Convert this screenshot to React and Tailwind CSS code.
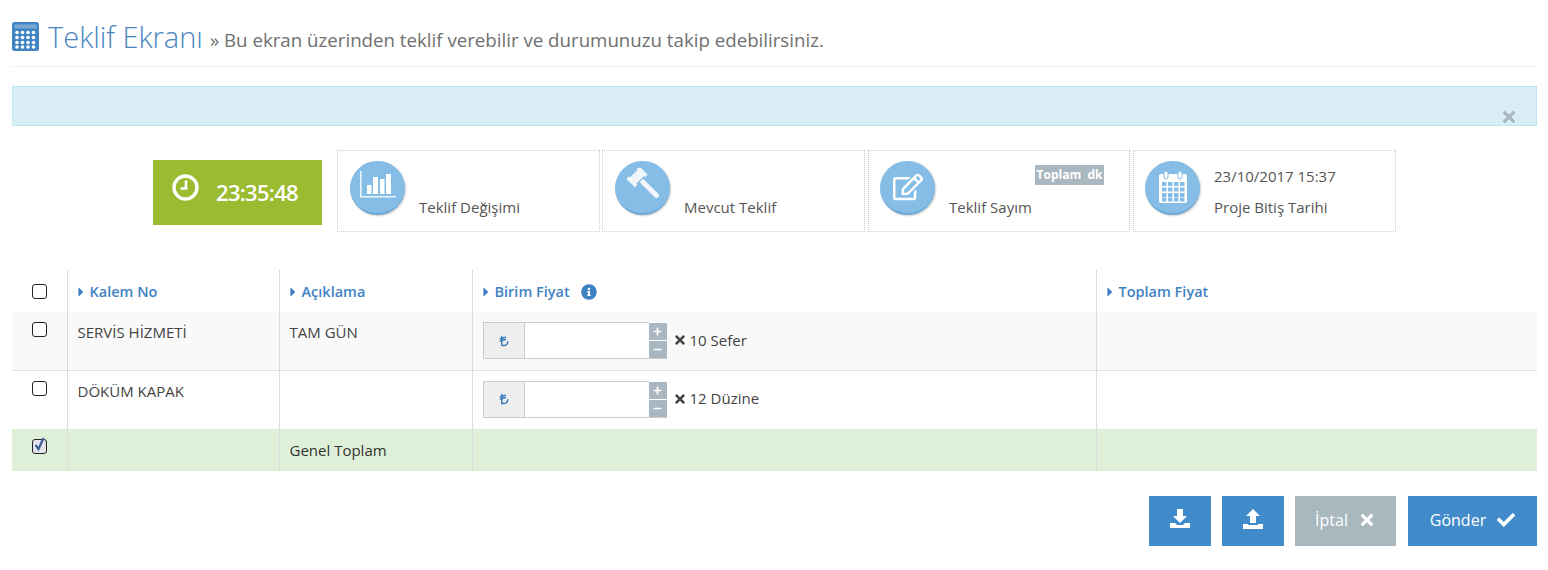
import React from "react";
import { FaInfoCircle, FaTimes, FaCheck, FaCaretRight, FaPlus, FaMinus, FaRegEdit } from "react-icons/fa";
import { FaTurkishLiraSign } from "react-icons/fa6";

const Calc = () => (
  <svg width="27" height="29" viewBox="0 0 27 29">
    <rect x="0" y="0" width="27" height="29" rx="2.5" fill="#4285c4" />
    <rect x="2.5" y="2.5" width="22" height="4" fill="#fff" opacity="0.3" />
    {[10.5, 15.5, 20.5, 25].map((y) =>
      [5, 10.5, 16, 21.5].map((x) => <circle key={x + "-" + y} cx={x} cy={y} r="1.8" fill="#fff" />)
    )}
  </svg>
);

const ClockIcon = () => (
  <svg width="27" height="27" viewBox="0 0 27 27" fill="none" stroke="#fff">
    <circle cx="13.5" cy="13.5" r="11.5" strokeWidth="3.4" />
    <path d="M14 6.5v8H8.5" strokeWidth="2.6" />
  </svg>
);

const ChartIcon = () => (
  <svg width="38" height="30" viewBox="0 0 38 30" fill="#fff" className="-mt-[5px]">
    <path d="M1 1h1.5v25H37v1.5H1z" opacity="0.85" />
    <rect x="8" y="15" width="4.5" height="9" />
    <rect x="14" y="7" width="5" height="17" />
    <rect x="21" y="9" width="4.5" height="15" />
    <rect x="27" y="4" width="5" height="20" />
  </svg>
);

const GavelIcon = () => (
  <svg width="38" height="38" viewBox="0 0 38 38" fill="#f1f6fa">
    <g transform="rotate(-45 19 19)">
      <rect x="14" y="3" width="16" height="9" />
      <rect x="13" y="1.5" width="3.5" height="12" rx="0.5" />
      <rect x="27.5" y="1.5" width="3.5" height="12" rx="0.5" />
      <rect x="20" y="13" width="5" height="24" rx="2" />
    </g>
  </svg>
);

const CalIcon = () => (
  <svg width="30" height="32" viewBox="0 0 30 32">
    <path d="M3 3h24a2 2 0 0 1 2 2v25a2 2 0 0 1-2 2H3a2 2 0 0 1-2-2V5a2 2 0 0 1 2-2z" fill="#fff" />
    {[11, 16.5, 22, 26.5].map((y) =>
      [4, 10, 16, 22].map((x) => <rect key={x + "-" + y} x={x} y={y} width="4.5" height="4" fill="#85bde6" />)
    )}
    <rect x="6" y="0" width="4" height="8" rx="2" fill="#fff" stroke="#85bde6" />
    <rect x="20" y="0" width="4" height="8" rx="2" fill="#fff" stroke="#85bde6" />
  </svg>
);

const Circle = ({ children }) => (
  <div className="w-[55px] h-[54px] shrink-0 rounded-full bg-[#85bde6] border-b-2 border-[#6ba7d6] shadow-[1px_1px_2px_rgba(0,0,0,0.2)] flex items-center justify-center">
    {children}
  </div>
);

const Stat = ({ icon, top, label, className }) => (
  <div className={"h-[82px] border border-dotted border-[#ccc] pt-[10px] flex " + className}>
    <Circle>{icon}</Circle>
    <div className="ml-[14px] flex-1 pr-[25px] flex flex-col text-[15px] leading-5 text-[#555]">
      <div className="h-[36px] pt-[5px]">{top}</div>
      <div>{label}</div>
    </div>
  </div>
);

const Check = ({ checked }) => (
  <span className={"inline-flex w-[15px] h-[15px] rounded-[3px] border border-[#222] items-center justify-center " + (checked ? "bg-[#e4e4ea]" : "bg-white")}>
    {checked && (
      <svg width="13" height="15" viewBox="0 0 13 15" className="-mt-[5px]">
        <path d="M2.5 8l3 4 5-11" fill="none" stroke="#3f5f9a" strokeWidth="2.2" />
      </svg>
    )}
  </span>
);

const Head = ({ children }) => (
  <span className="inline-flex items-center text-[14.5px] font-semibold text-[#3f82c4]">
    <FaCaretRight className="w-[13px] h-[14px] pr-[5px] -ml-[1px]" />
    {children}
  </span>
);

const PriceInput = ({ text }) => (
  <div className="flex items-center">
    <div className="w-[42px] h-[37px] bg-[#eeeeee] border border-[#ccc] flex items-center justify-center text-[#3f7cbc]">
      <FaTurkishLiraSign className="text-[12px]" />
    </div>
    <div className="w-[125px] h-[37px] bg-white border-y border-[#ccc]" />
    <div className="w-[18px] h-[37px] -ml-[1px] flex flex-col gap-[1px] pt-[1px] border-b border-[#ccc] bg-white">
      <div className="h-[17px] bg-[#a9b7c2] flex items-center justify-center text-white text-[9px]"><FaPlus /></div>
      <div className="h-[17px] bg-[#a9b7c2] flex items-center justify-center text-white text-[9px]"><FaMinus /></div>
    </div>
    <span className="ml-[6px] -mt-[1px] inline-flex items-center text-[15px] text-[#444]">
      <FaTimes className="text-[14px] mr-[3px]" />
      {text}
    </span>
  </div>
);

const line = "border-r border-[#ddd] px-[10px]";
const cell = line + " align-top";
const headCell = line + " align-middle";

export default function App() {
  return (
    <div className="bg-white h-[570px] pl-3 pr-[11px] overflow-hidden" style={{ fontFamily: '"Open Sans", sans-serif' }}>
      <div className="pt-[18px] h-[67px] border-b border-dotted border-[#ddd] flex items-start">
        <div className="mt-[4px] mr-[9px]"><Calc /></div>
        <span className="text-[29px] leading-[37px] font-light text-[#4a86c0]">Teklif Ekranı</span>
        <span className="ml-[7px] mt-[9px] text-[18.7px] leading-[26px] text-[#707070]">» Bu ekran üzerinden teklif verebilir ve durumunuzu takip edebilirsiniz.</span>
      </div>

      <div className="mt-[19px] h-[40px] bg-[#d9edf7] border border-[#bce8f1] flex items-end justify-end pr-[18px] text-[#a9b7c0] text-[18px]">
        <FaTimes className="-mb-[1px]" />
      </div>

      <div className="mt-[24px] pl-[141px] flex items-start">
        <div className="mt-[10px] w-[169px] h-[65px] bg-[#9bbc30] flex items-center pl-[19px] text-white">
          <div className="-mt-[10px]"><ClockIcon /></div>
          <span className="ml-[17px] -mt-[1px] text-[22px] font-semibold tracking-[-0.7px]">23:35:48</span>
        </div>
        <Stat className="ml-[15px] w-[263px] pl-3" icon={<ChartIcon />} label="Teklif Değişimi" />
        <Stat className="ml-[2px] w-[263px] pl-3" icon={<GavelIcon />} label="Mevcut Teklif" />
        <Stat
          className="ml-[3px] w-[262px] pl-[11px]"
          icon={<FaRegEdit className="text-white text-[30px]" />}
          top={<div className="flex justify-end -mt-[1px]"><span className="bg-[#a9b7c0] text-white text-[12px] font-bold h-[20px] leading-[20px] w-[69px] text-center whitespace-pre">Toplam  dk</span></div>}
          label="Teklif Sayım"
        />
        <Stat className="ml-[3px] w-[263px] pl-[11px]" icon={<CalIcon />} top="23/10/2017 15:37" label="Proje Bitiş Tarihi" />
      </div>

      <table className="mt-[38px] w-[1525px] table-fixed border-collapse text-[15px] text-[#444]">
        <colgroup>
          <col className="w-[55px]" />
          <col className="w-[212px]" />
          <col className="w-[193px]" />
          <col className="w-[624px]" />
          <col />
        </colgroup>
        <tbody>
          <tr className="h-[42px]">
            <td className={headCell}><div className="flex justify-center pt-[1px]"><Check /></div></td>
            <td className={headCell}><div className="pt-[3px]"><Head>Kalem No</Head></div></td>
            <td className={headCell}><div className="pt-[3px]"><Head>Açıklama</Head></div></td>
            <td className={headCell}>
              <div className="pt-[3px]"><span className="inline-flex items-center"><Head>Birim Fiyat</Head><FaInfoCircle className="ml-[11px] text-[16px] text-[#3f82c4]" /></span></div>
            </td>
            <td className="px-[10px] align-middle"><div className="pt-[3px]"><Head>Toplam Fiyat</Head></div></td>
          </tr>
          <tr className="h-[58px] bg-[#f9f9f9] border-b border-[#ddd]">
            <td className={cell}><div className="flex justify-center pt-[10px]"><Check /></div></td>
            <td className={cell + " pt-[10px] leading-5"}>SERVİS HİZMETİ</td>
            <td className={cell + " pt-[10px] leading-5"}>TAM GÜN</td>
            <td className={cell + " pt-[10px]"}><PriceInput text="10 Sefer" /></td>
            <td />
          </tr>
          <tr className="h-[59px]">
            <td className={cell}><div className="flex justify-center pt-[10px]"><Check /></div></td>
            <td className={cell + " pt-[10px] leading-5"}>DÖKÜM KAPAK</td>
            <td className={cell} />
            <td className={cell + " pt-[10px]"}><PriceInput text="12 Düzine" /></td>
            <td />
          </tr>
          <tr className="h-[42px] bg-[#dff0d8]">
            <td className={cell}><div className="flex justify-center pt-[10px]"><Check checked /></div></td>
            <td className={cell} />
            <td className={cell + " pt-[11px] leading-5 text-[#333]"}>Genel Toplam</td>
            <td className={cell} />
            <td />
          </tr>
        </tbody>
      </table>

      <div className="mt-[25px] flex justify-end text-white text-[16px]">
        <button className="w-[62px] h-[50px] bg-[#428bca] flex items-center justify-center pb-[4px]">
          <svg width="20" height="20" viewBox="0 0 20 20" fill="#fff"><path d="M7 0h6v7h4l-7 7-7-7h4zM0 14h5l2 2h6l2-2h5v5H0z" /></svg>
        </button>
        <button className="ml-[11px] w-[62px] h-[50px] bg-[#428bca] flex items-center justify-center pb-[4px]">
          <svg width="20" height="20" viewBox="0 0 20 20" fill="#fff"><path d="M10 0l7 7h-4v7H7V7H3zM0 15h5v1h10v-1h5v5H0z" /></svg>
        </button>
        <button className="ml-[11px] w-[101px] h-[50px] bg-[#a9b7bf] flex items-center justify-center gap-[10px] pb-[2px]">
          İptal <FaTimes className="text-[18px]" />
        </button>
        <button className="ml-[12px] w-[129px] h-[50px] bg-[#428bca] flex items-center justify-center gap-[11px] pb-[2px]">
          Gönder <FaCheck className="text-[18px]" />
        </button>
      </div>
    </div>
  );
}
